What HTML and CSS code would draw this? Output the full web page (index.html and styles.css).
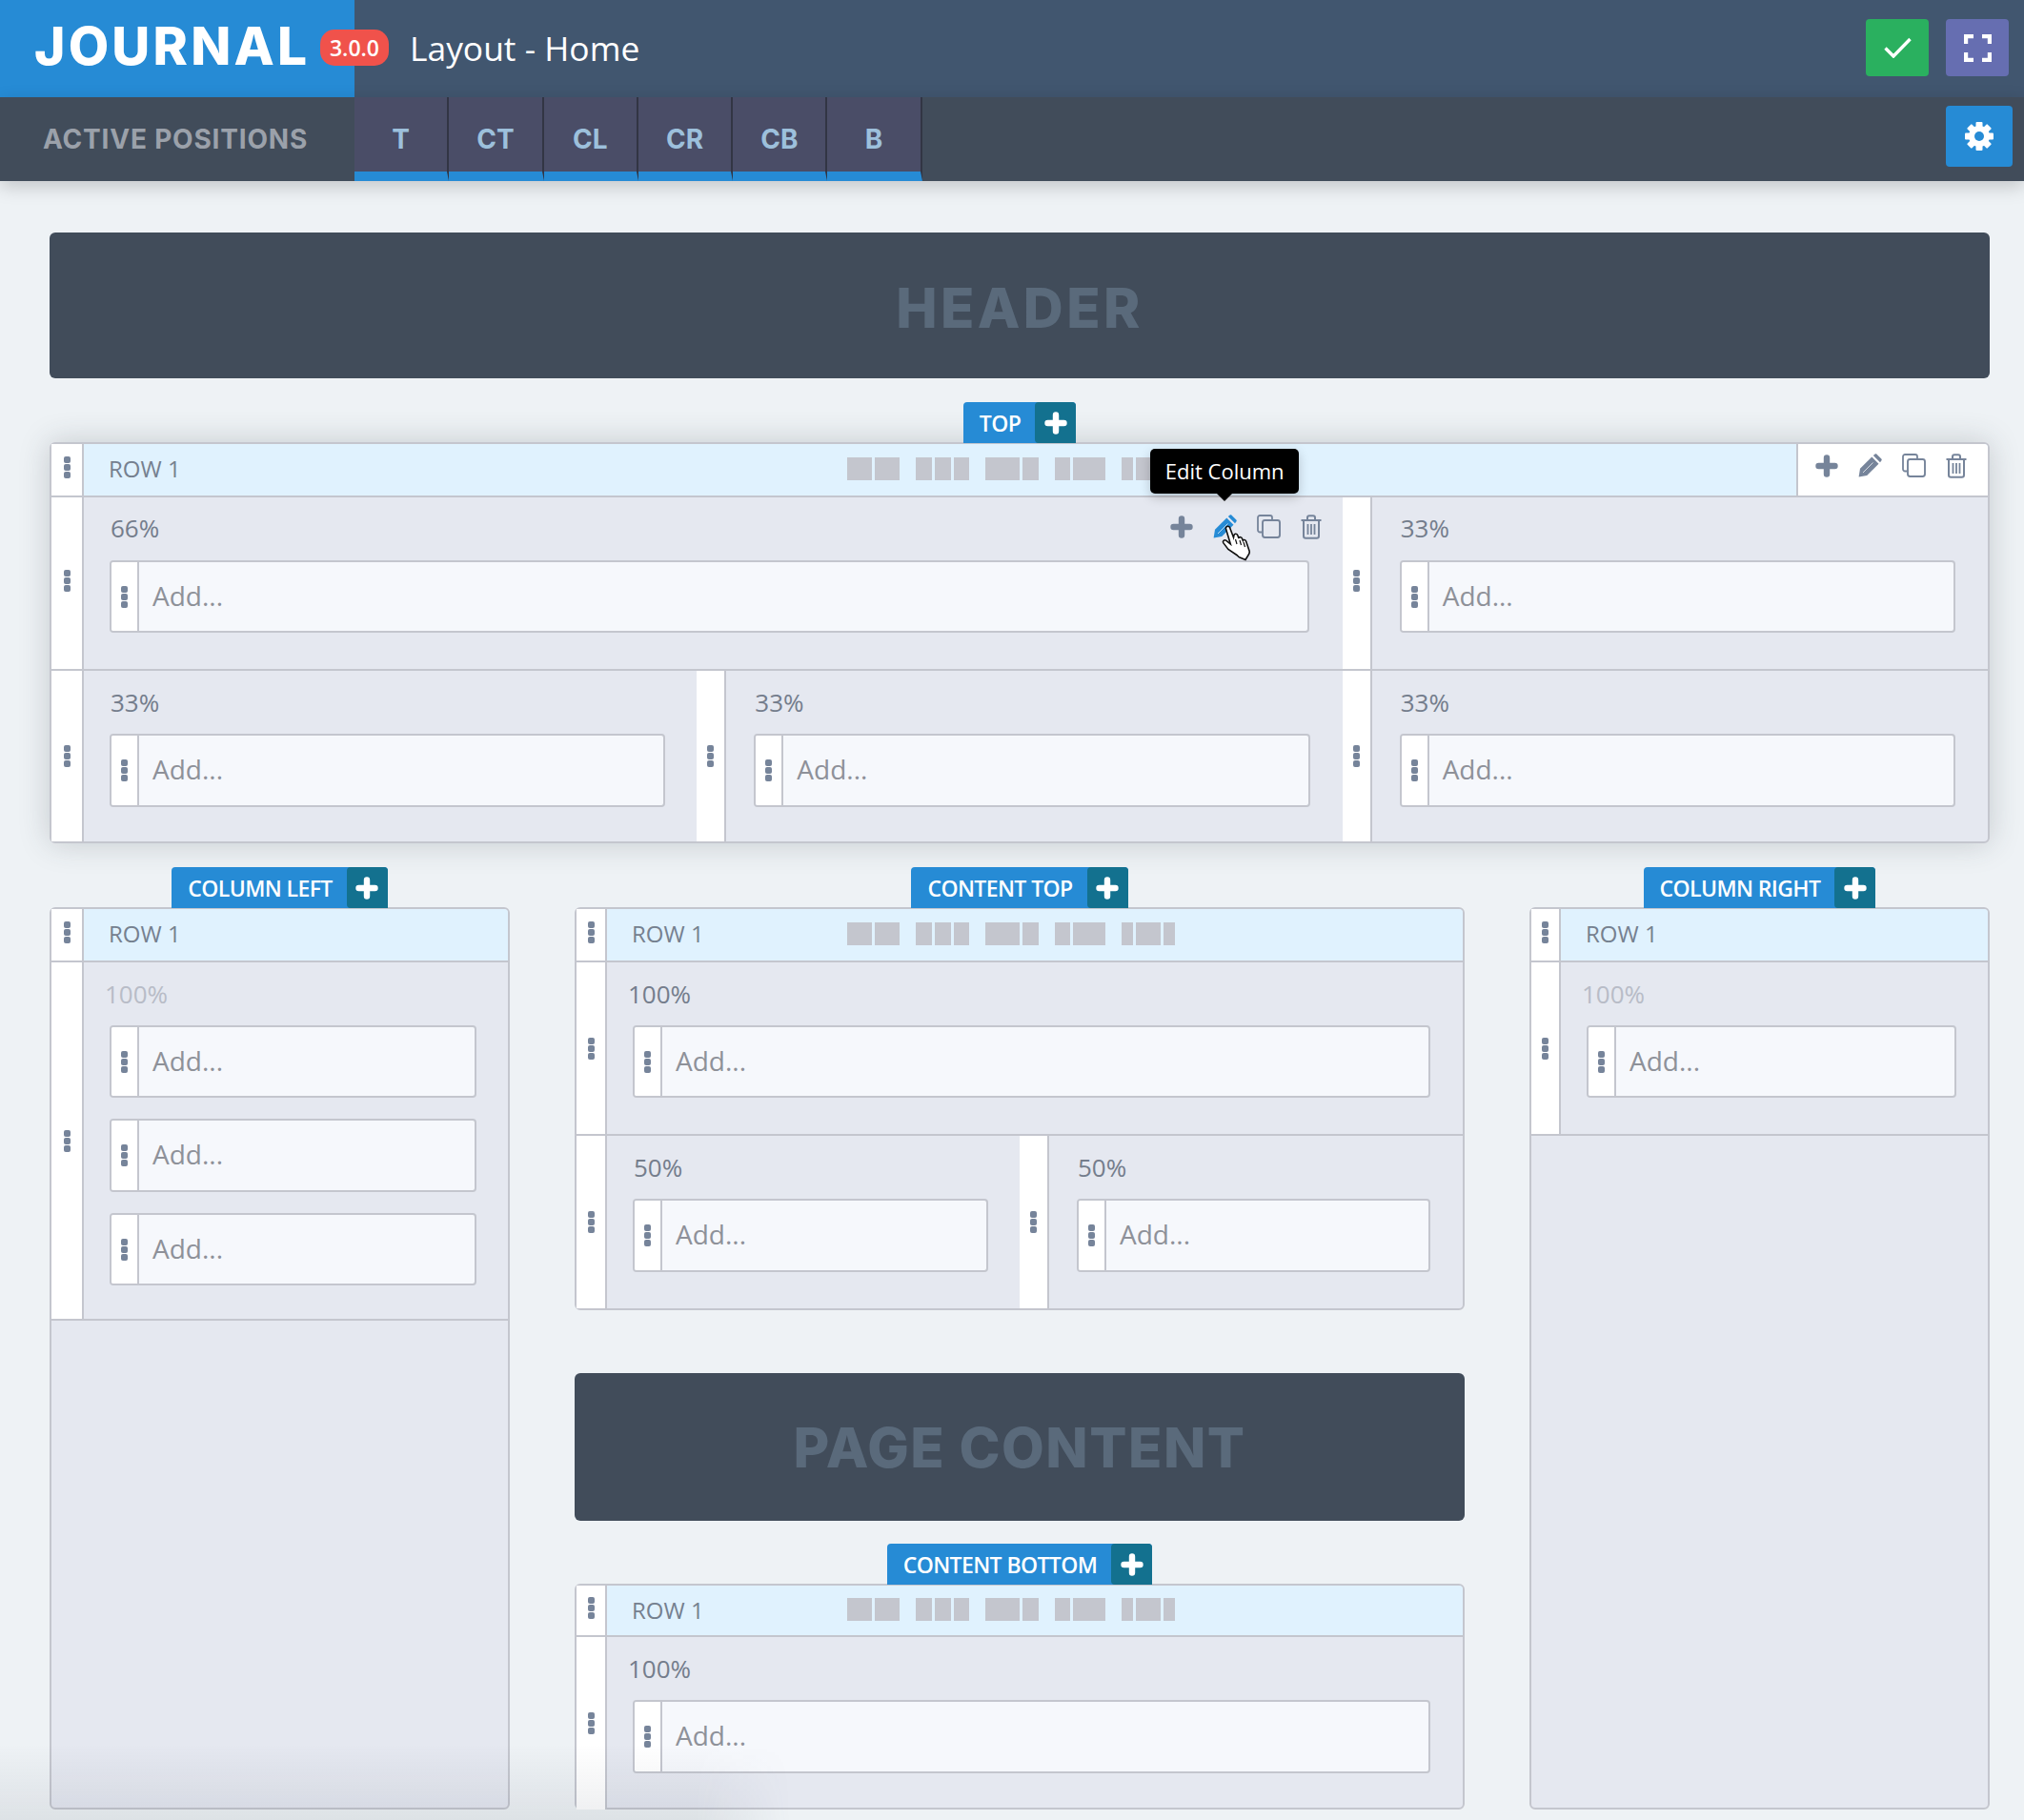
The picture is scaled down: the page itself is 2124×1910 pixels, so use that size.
FILE: index.html
```html
<!DOCTYPE html>
<html lang="en">
<head>
    <meta charset="UTF-8">
    <title>Journal - Layout Home</title>
    <link rel="stylesheet" href="styles.css">
</head>
<body>
    <svg class="sprite" width="0" height="0">
        <symbol id="i-plus" viewBox="0 0 24 24">
            <path d="M12 3.5v17M3.5 12h17" fill="none" stroke="currentColor" stroke-width="6.4" stroke-linecap="round"/>
        </symbol>
        <symbol id="i-pencil" viewBox="0 0 25 25">
            <path d="M.6 24.6L2 15.8 14.3 3.5l7.2 7.2L9.200 23z" fill="currentColor"/>
            <path d="M15.800 2l1.600-1.300c.7-.6 1.500-.6 2.100 0l4.800 4.800c.6.6.6 1.400 0 2.100L23 9.200z" fill="currentColor"/>
            <path d="M5 20L15.500 9.500" stroke="#fff" stroke-width="1" fill="none" opacity=".7"/>
        </symbol>
        <symbol id="i-copy" viewBox="0 0 25 25">
            <path d="M5 18.500H3.200A2.200 2.200 0 0 1 1 16.300V3.200A2.200 2.200 0 0 1 3.200 1h10.600A2.200 2.200 0 0 1 16 3.200V5" fill="none" stroke="currentColor" stroke-width="1.800"/>
            <rect x="6" y="6" width="18" height="18" rx="2.400" fill="none" stroke="currentColor" stroke-width="1.900"/>
        </symbol>
        <symbol id="i-trash" viewBox="0 0 22 26">
            <path d="M.5 6h21M7 6V3.200C7 2 8 1.200 9 1.200h4c1 0 2 .8 2 2V6M3 6v16.500c0 1.300 1 2.300 2.200 2.300h11.600c1.200 0 2.200-1 2.200-2.300V6" fill="none" stroke="currentColor" stroke-width="2"/>
            <path d="M7.500 10v11M11 10v11M14.500 10v11" fill="none" stroke="currentColor" stroke-width="1.800"/>
        </symbol>
    </svg>

    <header class="topbar">
        <div class="brand">JOURNAL</div>
        <span class="version">3.0.0</span>
        <div class="page-title">Layout - Home</div>
        <div class="topbar-btns">
            <a class="square-btn btn-green">
                <svg width="29" height="22" viewBox="0 0 29 22"><path d="M1.500 11.500l8.500 8.500L27.500 2" fill="none" stroke="#fff" stroke-width="3.400"/></svg>
            </a>
            <a class="square-btn btn-purple">
                <svg width="29" height="29" viewBox="0 0 29 29"><path d="M2 10V2h8M19 2h8v8M27 19v8h-8M10 27H2v-8" fill="none" stroke="#fff" stroke-width="4.400"/></svg>
            </a>
        </div>
    </header>

    <div class="subbar">
        <div class="subbar-title">ACTIVE POSITIONS</div>
        <div class="pos-tabs">
            <a class="pos-tab">T</a>
            <a class="pos-tab">CT</a>
            <a class="pos-tab">CL</a>
            <a class="pos-tab">CR</a>
            <a class="pos-tab">CB</a>
            <a class="pos-tab">B</a>
        </div>
        <a class="gear-btn">
            <svg width="30" height="30" viewBox="-15 -15 30 30">
                <g fill="#fff">
                    <rect x="-3.500" y="-15" width="7" height="30" rx="1"/>
                    <rect x="-3.500" y="-15" width="7" height="30" rx="1" transform="rotate(45)"/>
                    <rect x="-3.500" y="-15" width="7" height="30" rx="1" transform="rotate(90)"/>
                    <rect x="-3.500" y="-15" width="7" height="30" rx="1" transform="rotate(135)"/>
                    <circle r="11"/>
                </g>
                <circle r="5" fill="#268bd5"/>
            </svg>
        </a>
    </div>

    <main class="page">
        <div class="band band-header">HEADER</div>

        <section class="position position-top">
            <div class="section-tab"><span class="section-name">TOP</span><span class="section-add"><svg class="icon-22"><use href="#i-plus"/></svg></span></div>
            <div class="panel panel-shadow panel-wide">
                <div class="row-head">
                    <div class="handle handle-first"><i class="dots"></i></div>
                    <div class="row-title">ROW 1</div>
                    <div class="ruler">
                        <div class="ruler-set"><i class="w26"></i><i class="w26"></i></div>
                        <div class="ruler-set"><i class="w17"></i><i class="w17"></i><i class="w16"></i></div>
                        <div class="ruler-set"><i class="w36"></i><i class="w17"></i></div>
                        <div class="ruler-set"><i class="w16"></i><i class="w34"></i></div>
                        <div class="ruler-set"><i class="w12"></i><i class="w26"></i><i class="w12"></i></div>
                    </div>
                    <div class="row-actions">
                        <svg class="icon-plus"><use href="#i-plus"/></svg>
                        <svg class="icon-edit"><use href="#i-pencil"/></svg>
                        <svg class="icon-edit"><use href="#i-copy"/></svg>
                        <svg class="icon-trash"><use href="#i-trash"/></svg>
                    </div>
                </div>
                <div class="row row-first">
                    <div class="col col-2">
                        <div class="handle handle-first"><i class="dots"></i></div>
                        <div class="cell">
                            <div class="cell-head">
                                <span class="cell-label">66%</span>
                                <div class="cell-actions">
                                    <svg class="icon-plus"><use href="#i-plus"/></svg>
                                    <span class="active-edit">
                                        <svg class="icon-edit"><use href="#i-pencil"/></svg>
                                        <span class="tooltip">Edit Column</span>
                                        <svg class="hand" width="31" height="38" viewBox="0 0 31 38">
                                            <path d="M4.500 4C3.800 1.500 7.200.2 8.500 2.500l4 10.500.5-2.600c.5-1.700 3-1.600 3.800.3l1.200 3.300c.2-1.900 2.800-1.700 3.500.2l.8 2.100c.5-1.300 2.700-1 3.300.8l3.400 9.900c.6 2-.1 3.400-1 4.500l-3 5-6.500-2.700c-.8-.4-1.700-1.600-2.600-2.300l-9-6.100-5-6.500c-1.300-2 .9-4 3-2.600L9.300 20z" fill="#fff" stroke="#111" stroke-width="1.600"/>
                                            <path d="M14.500 15l1.500 5M19 16l1.500 5M23 18l1.500 5" stroke="#111" stroke-width="1.200" fill="none"/>
                                        </svg>
                                    </span>
                                    <svg class="icon-edit"><use href="#i-copy"/></svg>
                                    <svg class="icon-trash"><use href="#i-trash"/></svg>
                                </div>
                            </div>
                            <div class="box"><div class="box-handle"><i class="dots"></i></div><span class="box-text">Add...</span></div>
                        </div>
                    </div>
                    <div class="col col-1">
                        <div class="handle"><i class="dots"></i></div>
                        <div class="cell">
                            <div class="cell-head"><span class="cell-label">33%</span></div>
                            <div class="box"><div class="box-handle"><i class="dots"></i></div><span class="box-text">Add...</span></div>
                        </div>
                    </div>
                </div>
                <div class="row row-last">
                    <div class="col col-1">
                        <div class="handle handle-first"><i class="dots"></i></div>
                        <div class="cell">
                            <div class="cell-head"><span class="cell-label">33%</span></div>
                            <div class="box box-tall"><div class="box-handle"><i class="dots"></i></div><span class="box-text">Add...</span></div>
                        </div>
                    </div>
                    <div class="col col-1">
                        <div class="handle"><i class="dots"></i></div>
                        <div class="cell">
                            <div class="cell-head"><span class="cell-label">33%</span></div>
                            <div class="box box-tall"><div class="box-handle"><i class="dots"></i></div><span class="box-text">Add...</span></div>
                        </div>
                    </div>
                    <div class="col col-1">
                        <div class="handle"><i class="dots"></i></div>
                        <div class="cell">
                            <div class="cell-head"><span class="cell-label">33%</span></div>
                            <div class="box box-tall"><div class="box-handle"><i class="dots"></i></div><span class="box-text">Add...</span></div>
                        </div>
                    </div>
                </div>
            </div>
        </section>

        <div class="columns">
            <section class="position side">
                <div class="section-tab"><span class="section-name">COLUMN LEFT</span><span class="section-add"><svg class="icon-22"><use href="#i-plus"/></svg></span></div>
                <div class="panel panel-fill">
                    <div class="row-head">
                        <div class="handle handle-first"><i class="dots"></i></div>
                        <div class="row-title">ROW 1</div>
                    </div>
                    <div class="row">
                        <div class="col col-1">
                            <div class="handle handle-first"><i class="dots"></i></div>
                            <div class="cell cell-stack">
                                <div class="cell-head"><span class="cell-label label-full muted">100%</span></div>
                                <div class="box"><div class="box-handle"><i class="dots"></i></div><span class="box-text">Add...</span></div>
                                <div class="box box-tall"><div class="box-handle"><i class="dots"></i></div><span class="box-text">Add...</span></div>
                                <div class="box"><div class="box-handle"><i class="dots"></i></div><span class="box-text">Add...</span></div>
                            </div>
                        </div>
                    </div>
                </div>
            </section>

            <div class="center">
                <section class="position">
                    <div class="section-tab"><span class="section-name">CONTENT TOP</span><span class="section-add"><svg class="icon-22"><use href="#i-plus"/></svg></span></div>
                    <div class="panel panel-center">
                        <div class="row-head">
                            <div class="handle handle-first"><i class="dots"></i></div>
                            <div class="row-title">ROW 1</div>
                            <div class="ruler">
                                <div class="ruler-set"><i class="w26"></i><i class="w26"></i></div>
                                <div class="ruler-set"><i class="w17"></i><i class="w17"></i><i class="w16"></i></div>
                                <div class="ruler-set"><i class="w36"></i><i class="w17"></i></div>
                                <div class="ruler-set"><i class="w16"></i><i class="w34"></i></div>
                                <div class="ruler-set"><i class="w12"></i><i class="w26"></i><i class="w12"></i></div>
                            </div>
                        </div>
                        <div class="row">
                            <div class="col col-1">
                                <div class="handle handle-first"><i class="dots"></i></div>
                                <div class="cell">
                                    <div class="cell-head"><span class="cell-label label-full">100%</span></div>
                                    <div class="box"><div class="box-handle"><i class="dots"></i></div><span class="box-text">Add...</span></div>
                                </div>
                            </div>
                        </div>
                        <div class="row row-last">
                            <div class="col col-1">
                                <div class="handle handle-first"><i class="dots"></i></div>
                                <div class="cell">
                                    <div class="cell-head"><span class="cell-label">50%</span></div>
                                    <div class="box box-tall"><div class="box-handle"><i class="dots"></i></div><span class="box-text">Add...</span></div>
                                </div>
                            </div>
                            <div class="col col-1">
                                <div class="handle"><i class="dots"></i></div>
                                <div class="cell">
                                    <div class="cell-head"><span class="cell-label">50%</span></div>
                                    <div class="box box-tall"><div class="box-handle"><i class="dots"></i></div><span class="box-text">Add...</span></div>
                                </div>
                            </div>
                        </div>
                    </div>
                </section>

                <div class="band band-content">PAGE CONTENT</div>

                <section class="position position-fill">
                    <div class="section-tab"><span class="section-name">CONTENT BOTTOM</span><span class="section-add"><svg class="icon-22"><use href="#i-plus"/></svg></span></div>
                    <div class="panel panel-fill panel-center">
                        <div class="row-head row-head-short">
                            <div class="handle handle-first"><i class="dots"></i></div>
                            <div class="row-title">ROW 1</div>
                            <div class="ruler">
                                <div class="ruler-set"><i class="w26"></i><i class="w26"></i></div>
                                <div class="ruler-set"><i class="w17"></i><i class="w17"></i><i class="w16"></i></div>
                                <div class="ruler-set"><i class="w36"></i><i class="w17"></i></div>
                                <div class="ruler-set"><i class="w16"></i><i class="w34"></i></div>
                                <div class="ruler-set"><i class="w12"></i><i class="w26"></i><i class="w12"></i></div>
                            </div>
                        </div>
                        <div class="row row-stretch">
                            <div class="col col-1">
                                <div class="handle handle-first"><i class="dots"></i></div>
                                <div class="cell">
                                    <div class="cell-head"><span class="cell-label label-full">100%</span></div>
                                    <div class="box box-tall"><div class="box-handle"><i class="dots"></i></div><span class="box-text">Add...</span></div>
                                </div>
                            </div>
                        </div>
                    </div>
                </section>
            </div>

            <section class="position side">
                <div class="section-tab"><span class="section-name">COLUMN RIGHT</span><span class="section-add"><svg class="icon-22"><use href="#i-plus"/></svg></span></div>
                <div class="panel panel-fill">
                    <div class="row-head">
                        <div class="handle"><i class="dots"></i></div>
                        <div class="row-title">ROW 1</div>
                    </div>
                    <div class="row">
                        <div class="col col-1">
                            <div class="handle"><i class="dots"></i></div>
                            <div class="cell">
                                <div class="cell-head"><span class="cell-label label-full muted">100%</span></div>
                                <div class="box"><div class="box-handle"><i class="dots"></i></div><span class="box-text">Add...</span></div>
                            </div>
                        </div>
                    </div>
                </div>
            </section>
        </div>
    </main>

    <div class="bottom-fade"></div>
</body>
</html>
```

FILE: styles.css
```css
:root {
    --blue: #268bd5;
    --teal: #13718f;
    --line: #c4c6ce;
    --cell: #e5e8f0;
    --icon: #76849a;
    --dark: #414c5a;
}

* {
    box-sizing: border-box;
    margin: 0;
    padding: 0;
}

body {
    font-family: 'Open Sans', sans-serif;
    background: #eef2f5;
    height: 1910px;
    overflow: hidden;
    display: flex;
    flex-direction: column;
    position: relative;
}

.sprite {
    position: absolute;
}

/* top bars */
.topbar {
    height: 102px;
    flex: none;
    display: flex;
    align-items: center;
    background: #41566f;
    position: relative;
}

.brand {
    width: 372px;
    height: 102px;
    padding-left: 36px;
    background: var(--blue);
    color: #fff;
    font-family: 'Inter', sans-serif;
    font-weight: 800;
    font-size: 55px;
    line-height: 97px;
    letter-spacing: 3.2px;
}

.version {
    position: absolute;
    left: 336px;
    top: 31px;
    width: 72px;
    height: 38px;
    border-radius: 15px;
    background: #f0524b;
    color: #fff;
    font-size: 23px;
    font-weight: 600;
    line-height: 38px;
    text-align: center;
}

.page-title {
    margin-left: 58px;
    margin-bottom: 3px;
    color: #fff;
    font-size: 35.4px;
}

.topbar-btns {
    margin-left: auto;
    margin-right: 16px;
    margin-bottom: 2px;
    display: flex;
    gap: 18px;
}

.square-btn {
    width: 66px;
    height: 60px;
    border-radius: 4px;
    display: flex;
    align-items: center;
    justify-content: center;
}

.btn-green {
    background: #2ab05f;
}

.btn-purple {
    background: #666eb1;
}

.subbar {
    height: 88px;
    flex: none;
    display: flex;
    background: var(--dark);
    box-shadow: 0 6px 18px rgba(0, 0, 0, 0.18);
    position: relative;
    z-index: 2;
}

.subbar-title {
    width: 372px;
    padding-left: 45px;
    color: #9ba1aa;
    font-family: 'Inter', sans-serif;
    font-weight: 700;
    font-size: 28px;
    line-height: 88px;
    letter-spacing: 0.8px;
}

.pos-tabs {
    display: flex;
}

.pos-tab {
    width: 99.3px;
    height: 88px;
    background: #4a4d67;
    border-right: 2px solid #323544;
    border-bottom: 10px solid var(--blue);
    color: #9dc0dc;
    font-family: 'Inter', sans-serif;
    font-weight: 700;
    font-size: 28px;
    line-height: 88px;
    text-align: center;
}

.gear-btn {
    margin: 9px 12px 0 auto;
    width: 70px;
    height: 64px;
    border-radius: 4px;
    background: var(--blue);
    display: flex;
    align-items: center;
    justify-content: center;
}

/* page */
.page {
    flex: 1;
    min-height: 0;
    padding: 54px 36px 11px 52px;
    display: flex;
    flex-direction: column;
}

.band {
    background: var(--dark);
    border-radius: 6px;
    color: #5a6a7b;
    font-family: 'Inter', sans-serif;
    font-weight: 800;
    font-size: 58px;
    letter-spacing: 3.4px;
    text-align: center;
    height: 153px;
    line-height: 158px;
    flex: none;
}

.band-content {
    height: 155px;
    margin: 66px 0 24px;
    line-height: 156px;
    letter-spacing: 1.5px;
}

.position-top {
    margin-top: 25px;
}

.columns {
    flex: 1;
    min-height: 0;
    margin-top: 25px;
    display: grid;
    grid-template-columns: 483px 1fr 483px;
    gap: 68px;
}

.position {
    display: flex;
    flex-direction: column;
}

.side,
.position-fill {
    min-height: 0;
}

.position-fill {
    flex: 1;
}

.center {
    display: flex;
    flex-direction: column;
    min-height: 0;
}

.section-tab {
    align-self: center;
    height: 43px;
    margin-bottom: -1px;
    display: flex;
    background: var(--blue);
    border-radius: 4px 4px 0 0;
    color: #fff;
    font-size: 23px;
    font-weight: 600;
    line-height: 45px;
    position: relative;
    z-index: 1;
}

.section-name {
    padding: 0 15px 0 17px;
    letter-spacing: -0.6px;
}

.section-add {
    width: 43px;
    background: var(--teal);
    border-radius: 4px 4px 0 4px;
    display: flex;
    align-items: center;
    justify-content: center;
}

.icon-22 {
    width: 24px;
    height: 24px;
    color: #fff;
}

/* panels */
.panel {
    border: 2px solid var(--line);
    border-radius: 6px;
    background: var(--cell);
    display: flex;
    flex-direction: column;
    position: relative;
}

.panel-shadow {
    box-shadow: 0 0 32px rgba(50, 60, 70, 0.22);
}

.panel-fill {
    flex: 1;
    min-height: 0;
}

.row-head {
    height: 56px;
    flex: none;
    display: flex;
    align-items: stretch;
    background: #e0f2fe;
    border-bottom: 2px solid var(--line);
    border-radius: 4px 4px 0 0;
}

.row-head-short {
    height: 54px;
}

.row-head .handle {
    padding-bottom: 5px;
}

.handle {
    width: 31px;
    flex: none;
    background: #fff;
    border-right: 2px solid var(--line);
    display: flex;
    align-items: center;
    justify-content: center;
}

.handle-first {
    width: 34px;
}

.panel-center .handle-first {
    width: 32px;
}

.row-first .handle {
    padding-bottom: 5px;
}

.dots {
    display: block;
    width: 7px;
    height: 7px;
    border-radius: 2px;
    background: var(--icon);
    box-shadow: 0 8px 0 var(--icon), 0 -8px 0 var(--icon);
}

.row-title {
    width: 252px;
    padding-left: 26px;
    color: #75808f;
    font-size: 24px;
    line-height: 52px;
}

.panel-wide .row-title {
    width: 801px;
}

.ruler {
    display: flex;
    gap: 17px;
    align-items: center;
    padding-bottom: 3px;
}

.ruler-set {
    display: flex;
    gap: 3px;
}

.ruler-set i {
    display: block;
    height: 24px;
    background: var(--line);
}

.w12 { width: 12px; }
.w16 { width: 16px; }
.w17 { width: 17px; }
.w26 { width: 26px; }
.w34 { width: 34px; }
.w36 { width: 36px; }

.row-actions {
    margin-left: auto;
    width: 201px;
    flex: none;
    background: #fff;
    border-left: 2px solid var(--line);
    display: flex;
    align-items: center;
    gap: 21px;
    padding: 0 0 9px 18px;
    color: var(--icon);
    border-radius: 0 4px 0 0;
}

.row {
    display: flex;
    border-bottom: 2px solid var(--line);
}

.row-last,
.row-stretch {
    border-bottom: 0;
}

.row-stretch {
    flex: 1;
}

.col {
    display: flex;
    min-width: 0;
}

.col-2 {
    flex: 2;
}

.col-1 {
    flex: 1;
}

.cell {
    flex: 1;
    min-width: 0;
    padding: 15px 34px 38px 27px;
}

.col-2 .cell {
    padding-right: 35px;
}

.col + .col .cell {
    padding-left: 29px;
}

.side .cell,
.row-last .col:first-child .cell {
    padding-right: 33px;
}

.row-last .cell {
    padding-bottom: 36px;
}

.panel-center .row-last .cell {
    padding-bottom: 38px;
}

.cell-stack {
    padding-bottom: 35px;
}

.cell-head {
    height: 36px;
    margin-bottom: 15px;
    display: flex;
    align-items: center;
    justify-content: space-between;
}

.cell-label {
    color: #747d8c;
    font-size: 26px;
    margin-left: 1px;
    margin-top: -1px;
}

.row-first .cell-label {
    margin-top: -2px;
}

.label-full {
    margin-left: -5px;
}

.muted {
    color: #b8bcc7;
}

.cell-actions {
    display: flex;
    align-items: center;
    gap: 21px;
    margin: -5px -13px 0 0;
    color: var(--icon);
}

.icon-plus {
    width: 24px;
    height: 24px;
}

.icon-edit {
    width: 25px;
    height: 25px;
    display: block;
}

.icon-trash {
    width: 22px;
    height: 26px;
}

.active-edit {
    position: relative;
    color: var(--blue);
}

.tooltip {
    position: absolute;
    left: 50%;
    bottom: 47px;
    transform: translateX(-50%);
    width: 156px;
    height: 47px;
    background: #000;
    border-radius: 5px;
    color: #fff;
    font-size: 22px;
    font-weight: 500;
    line-height: 47px;
    text-align: center;
    box-shadow: 0 4px 12px rgba(0, 0, 0, 0.2);
    z-index: 5;
}

.tooltip::after {
    content: '';
    position: absolute;
    left: 50%;
    top: 100%;
    margin-left: -8px;
    border: 8px solid transparent;
    border-bottom: 0;
    border-top-color: #000;
}

.hand {
    position: absolute;
    left: 9px;
    top: 11px;
    z-index: 6;
}

.box {
    height: 76px;
    display: flex;
    background: #f6f8fc;
    border: 2px solid var(--line);
    border-radius: 4px;
}

.box + .box {
    margin-top: 22px;
}

.box-tall {
    height: 77px;
}

.box-handle {
    width: 29px;
    background: #fff;
    border-right: 2px solid var(--line);
    display: flex;
    align-items: center;
    justify-content: center;
    border-radius: 2px 0 0 2px;
}

.box-text {
    padding-left: 14px;
    color: #8e9199;
    font-size: 28px;
    line-height: 70px;
}

.bottom-fade {
    position: absolute;
    left: 0;
    bottom: 0;
    width: 830px;
    height: 80px;
    background: linear-gradient(to bottom, rgba(60, 70, 90, 0), rgba(60, 70, 90, 0.09));
    -webkit-mask-image: linear-gradient(to right, #000 88%, transparent);
    mask-image: linear-gradient(to right, #000 88%, transparent);
    pointer-events: none;
}
```
